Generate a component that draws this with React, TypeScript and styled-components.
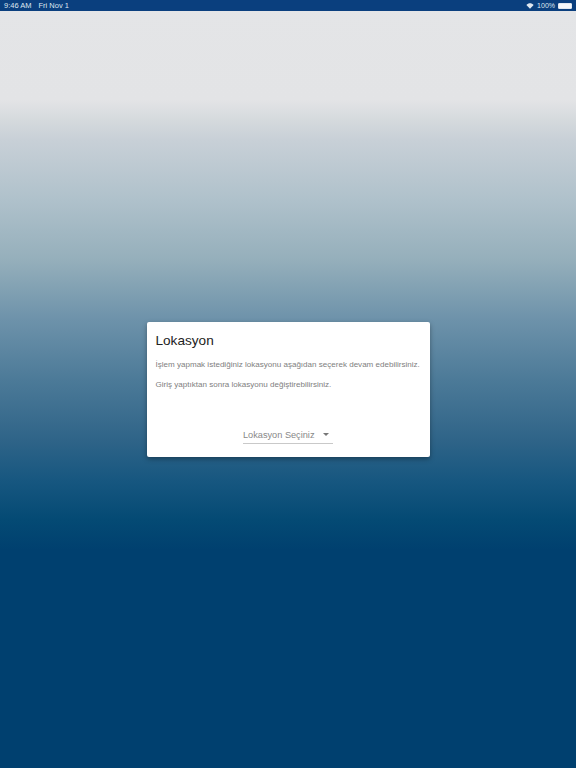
import styled, { createGlobalStyle } from "styled-components";

const GlobalStyle = createGlobalStyle`
    html, body {
        margin: 0;
        padding: 0;
        height: 100%;
        font-family: "Liberation Sans", Arial, sans-serif;
    }
`;

const Screen = styled.div`
    width: 576px;
    height: 768px;
    display: flex;
    flex-direction: column;
    overflow: hidden;
    background: linear-gradient(
        180deg,
        #e4e5e7 0,
        #e3e4e6 100px,
        #d5dadd 120px,
        #c8d0d7 140px,
        #afc1cb 200px,
        #95afbb 260px,
        #6d92aa 320px,
        #4c7a98 380px,
        #2f6488 440px,
        #175780 480px,
        #044a74 520px,
        #00406f 550px,
        #00406f 768px
    );
`;

const StatusBar = styled.div`
    height: 11px;
    flex: none;
    display: flex;
    align-items: center;
    justify-content: space-between;
    padding: 0 4px;
    background: #0a3f7e;
    color: #dfe7f0;
    font-size: 7.5px;
`;

const StatusGroup = styled.div<{ $gap: number }>`
    display: flex;
    align-items: center;
    gap: ${(props) => props.$gap}px;
`;

const BatteryLevel = styled.span`
    font-size: 7px;
`;

const Battery = styled.div`
    width: 12px;
    height: 4px;
    border: 0.5px solid #dfe7f0;
    border-radius: 1px;
    background: #f4f7fa;
`;

const Content = styled.main`
    flex: 1;
    display: flex;
    align-items: center;
    justify-content: center;
`;

const Card = styled.section`
    width: 283px;
    height: 135px;
    box-sizing: border-box;
    padding: 10px 9px 0;
    display: flex;
    flex-direction: column;
    background: #fff;
    border-radius: 2px;
    box-shadow: 0 2px 5px rgba(0, 0, 0, 0.35);
`;

const Title = styled.h1`
    margin: 0;
    font-size: 13.6px;
    line-height: 17px;
    font-weight: 400;
    color: #222;
`;

const Message = styled.p`
    margin: 10px 0 0;
    font-size: 8.05px;
    line-height: 11px;
    color: #808080;
    white-space: nowrap;

    & + & {
        margin-top: 9px;
    }
`;

const SelectBox = styled.div`
    align-self: center;
    width: 90px;
    height: 16px;
    margin-top: 38px;
    display: flex;
    align-items: center;
    justify-content: space-between;
    box-sizing: border-box;
    padding-bottom: 2px;
    border-bottom: 1px solid #c9c9c9;
    color: #888;
    font-size: 9.2px;
`;

const Caret = styled.span`
    width: 0;
    height: 0;
    margin-right: 4px;
    border-left: 3px solid transparent;
    border-right: 3px solid transparent;
    border-top: 3px solid #777;
`;

function App() {
    return (
        <Screen>
            <GlobalStyle />
            <StatusBar>
                <StatusGroup $gap={7}>
                    <span>9:46 AM</span>
                    <span>Fri Nov 1</span>
                </StatusGroup>
                <StatusGroup $gap={3}>
                    <svg width="8" height="6" viewBox="0 0 18 14">
                        <path d="M9 13.5 0.5 4.5C5.5-.4 12.5-.4 17.5 4.5Z" fill="#dfe7f0" />
                    </svg>
                    <BatteryLevel>100%</BatteryLevel>
                    <Battery />
                </StatusGroup>
            </StatusBar>
            <Content>
                <Card>
                    <Title>Lokasyon</Title>
                    <Message>İşlem yapmak istediğiniz lokasyonu aşağıdan seçerek devam edebilirsiniz.</Message>
                    <Message>Giriş yaptıktan sonra lokasyonu değiştirebilirsiniz.</Message>
                    <SelectBox>
                        <span>Lokasyon Seçiniz</span>
                        <Caret />
                    </SelectBox>
                </Card>
            </Content>
        </Screen>
    );
}

export default App;
